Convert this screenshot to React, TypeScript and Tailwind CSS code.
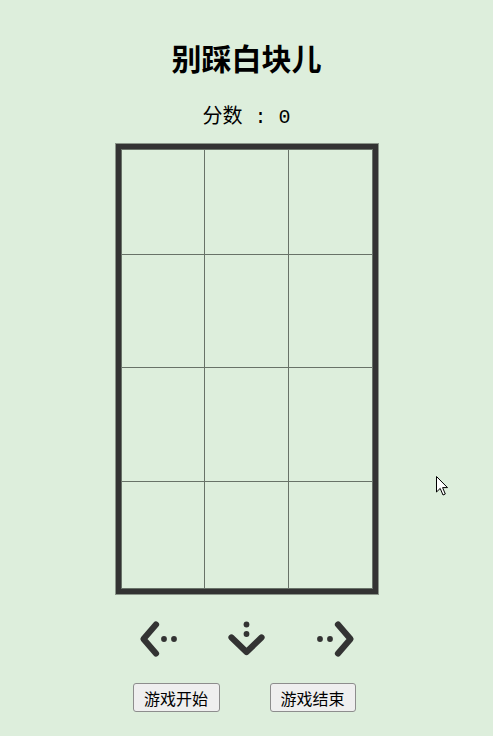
import React from "react";

const rows = [104, 112, 113, 106];

function Board() {
  return (
    <div className="mx-auto mt-[11px] w-[264px] border border-[#8a9589]">
      <div className="border-[5px] border-[#333333]">
        <div className="grid grid-cols-[82px_83px_83px] grid-rows-[104px_112px_113px_106px] gap-px bg-[#687268] p-px">
          {rows.map((_, r) =>
            [0, 1, 2].map((c) => (
              <div key={`${r}-${c}`} className="bg-[#ddeedc]" />
            ))
          )}
        </div>
      </div>
    </div>
  );
}

function LeftIcon() {
  return (
    <svg width="40" height="40" viewBox="0 0 40 40">
      <polyline
        points="17,4.5 4.5,19 17,33.5"
        fill="none"
        stroke="#333333"
        strokeWidth="6.2"
        strokeLinecap="round"
        strokeLinejoin="round"
      />
      <circle cx="25" cy="19" r="2.9" fill="#333333" />
      <circle cx="35" cy="19" r="2.9" fill="#333333" />
    </svg>
  );
}

function RightIcon() {
  return (
    <svg width="40" height="40" viewBox="0 0 40 40">
      <polyline
        points="23,4.5 35.5,19 23,33.5"
        fill="none"
        stroke="#333333"
        strokeWidth="6.2"
        strokeLinecap="round"
        strokeLinejoin="round"
      />
      <circle cx="15" cy="19" r="2.9" fill="#333333" />
      <circle cx="5" cy="19" r="2.9" fill="#333333" />
    </svg>
  );
}

function DownIcon() {
  return (
    <svg width="40" height="40" viewBox="0 0 40 40">
      <polyline
        points="4.5,17.5 19.5,32 34.5,17.5"
        fill="none"
        stroke="#333333"
        strokeWidth="6.2"
        strokeLinecap="round"
        strokeLinejoin="round"
      />
      <circle cx="19.5" cy="4.5" r="2.9" fill="#333333" />
      <circle cx="19.5" cy="14" r="2.9" fill="#333333" />
    </svg>
  );
}

export default function App() {
  return (
    <div
      className="relative min-h-screen w-full bg-[#ddeedc] text-black"
      style={{ fontFamily: '"Noto Sans CJK SC", "Noto Sans", sans-serif' }}
    >
      <div className="flex flex-col items-center pt-[39px]">
        <h1 className="text-[30px] font-bold leading-[36px]">别踩白块儿</h1>
        <div
          className="mt-[29px] text-[20px] leading-[28px] whitespace-pre"
          style={{ fontFamily: '"Liberation Mono", "Noto Sans CJK SC", monospace' }}
        >
          分数 : 0
        </div>
      </div>
      <Board />
      <div className="mt-[25px] flex justify-center gap-[48px] pl-[1px]">
        <LeftIcon />
        <DownIcon />
        <RightIcon />
      </div>
      <div className="mt-[23px] flex justify-center gap-[50px] pr-[5px]">
        <button className="h-[29px] w-[87px] rounded-[3px] border border-[#8d8d8d] bg-[#efefef] text-[16px] leading-none text-black">
          游戏开始
        </button>
        <button className="h-[29px] w-[86px] rounded-[3px] border border-[#8d8d8d] bg-[#efefef] text-[16px] leading-none text-black">
          游戏结束
        </button>
      </div>
      <svg
        className="absolute left-[436px] top-[476px]"
        width="13"
        height="21"
        viewBox="0 0 13 21"
      >
        <path
          d="M0.5,0.5 L0.5,16 L4.2,12.4 L7,19 L9.3,18 L6.6,11.6 L11.5,11.6 Z"
          fill="#ffffff"
          stroke="#000000"
          strokeWidth="1"
          strokeLinejoin="round"
        />
      </svg>
    </div>
  );
}
